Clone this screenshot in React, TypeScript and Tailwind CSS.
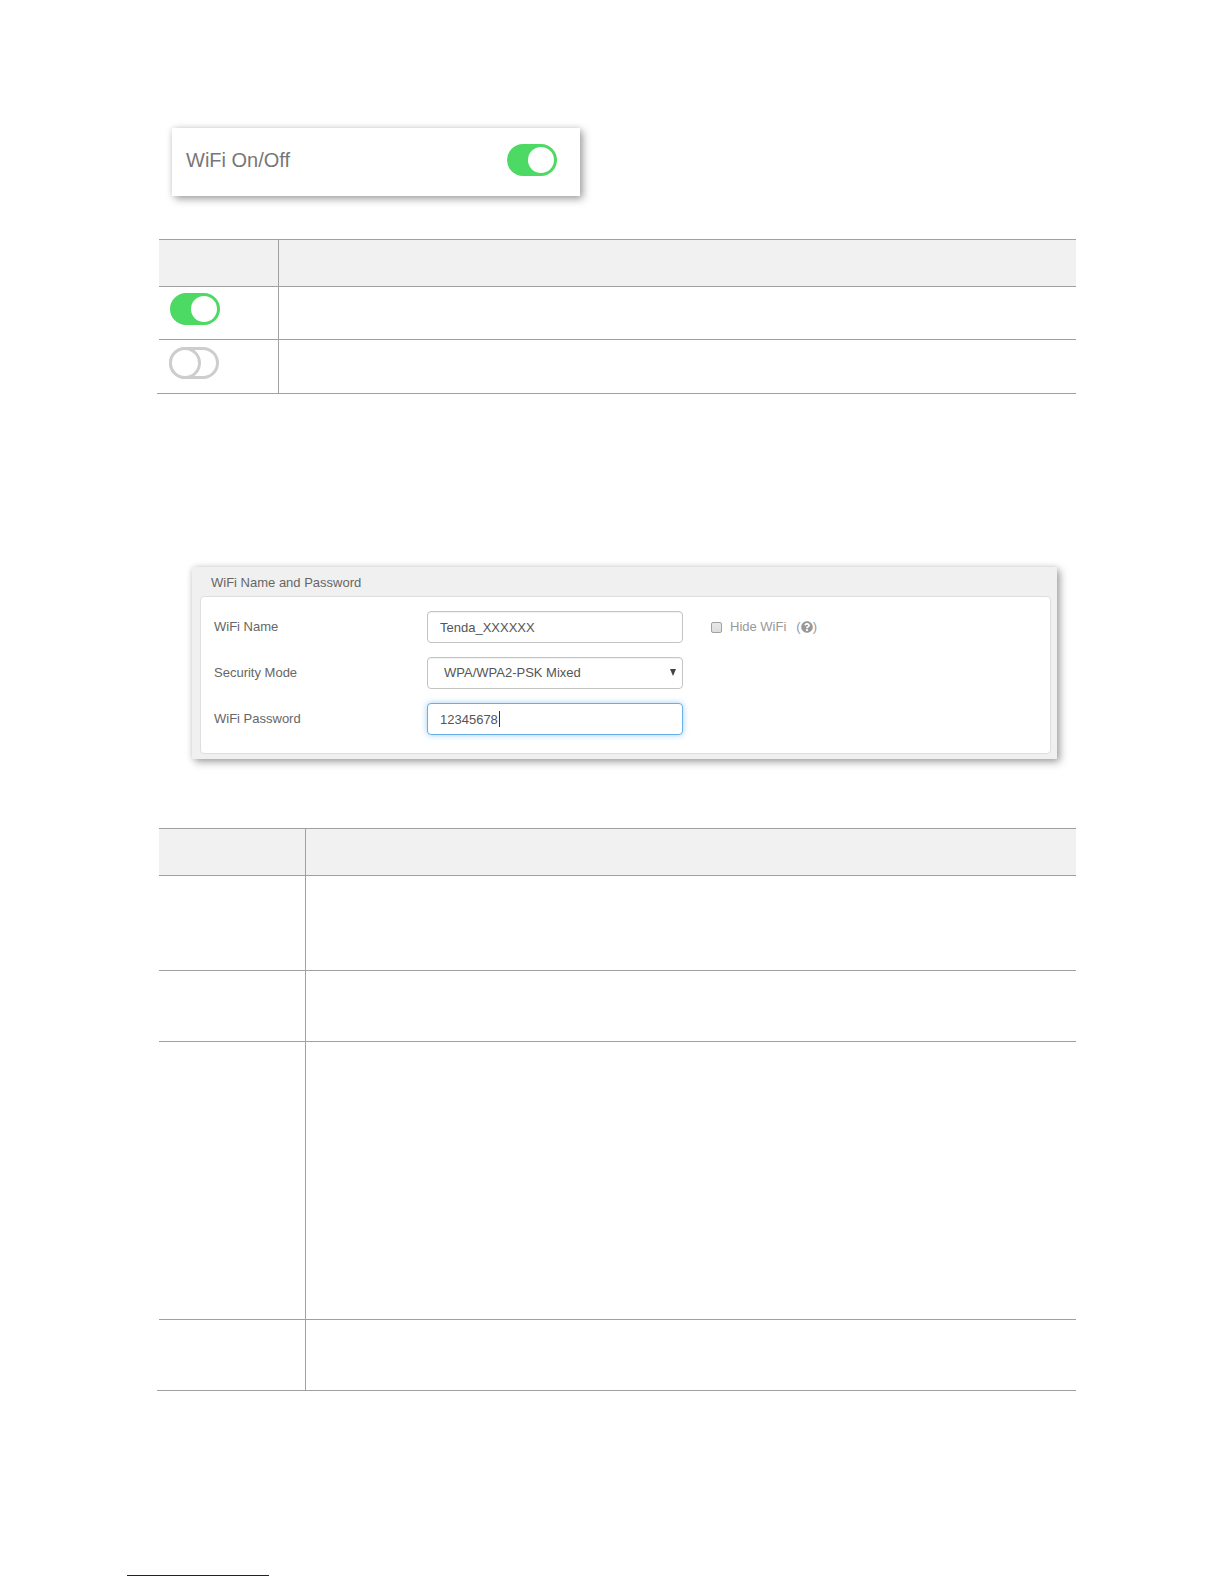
import { useState } from "react";
import { FaQuestionCircle } from "react-icons/fa";

interface ToggleProps {
  label: string;
  defaultChecked?: boolean;
}

function Toggle({ label, defaultChecked = false }: ToggleProps) {
  return (
    <input
      type="checkbox"
      role="switch"
      aria-label={label}
      defaultChecked={defaultChecked}
      className="flex h-8 w-[50px] shrink-0 appearance-none items-center rounded-full border-3 border-[#cdcdcd] bg-white before:-ml-[3px] before:size-8 before:shrink-0 before:rounded-full before:border-3 before:border-[#cdcdcd] before:bg-white before:content-[''] checked:justify-end checked:border-[#4cd964] checked:bg-[#4cd964] checked:before:ml-0 checked:before:size-[26px] checked:before:border-0"
    />
  );
}

const fieldClass =
  "h-8 w-full appearance-none rounded-[4px] border border-[#c4c4c4] bg-white text-[13px] text-[#555] shadow-[inset_0_1px_1px_rgba(0,0,0,0.06)] outline-none";

function WifiForm() {
  const [name, setName] = useState("Tenda_XXXXXX");
  const [password, setPassword] = useState("12345678");

  return (
    <section className="mr-[19px] ml-[35px] bg-[#f0f0f0] pr-[6px] pb-[5px] pl-2 text-[13px] text-[#666] shadow-[3px_3px_8px_rgba(0,0,0,0.35),0_0_6px_rgba(0,0,0,0.1)]">
      <h2 className="px-[11px] pt-[6px] pb-[3px] leading-5">WiFi Name and Password</h2>

      <form className="flex flex-col gap-[14px] rounded-[4px] border border-[#dedede] bg-white px-[13px] pt-[14px] pb-[18px]">
        <div className="flex items-center">
          <label htmlFor="wifi-name" className="w-[213px]">
            WiFi Name
          </label>
          <div className="w-64">
            <input
              id="wifi-name"
              type="text"
              value={name}
              onChange={(e) => setName(e.target.value)}
              className={`${fieldClass} px-3`}
            />
          </div>
          <label className="ml-7 flex items-center gap-2 text-[#999]">
            <input
              type="checkbox"
              className="size-[11px] appearance-none rounded-[2px] border border-[#a0a0a0] bg-linear-to-b from-[#e9e9e9] to-[#dcdcdc]"
            />
            Hide WiFi
          </label>
          <span className="ml-[10px] flex items-center text-[#999]">
            (<FaQuestionCircle className="size-3" />)
          </span>
        </div>

        <div className="flex items-center">
          <label htmlFor="security-mode" className="w-[213px]">
            Security Mode
          </label>
          <div className="relative w-64">
            <select id="security-mode" className={`${fieldClass} px-4`}>
              <option>WPA/WPA2-PSK Mixed</option>
            </select>
            <svg
              viewBox="0 0 6 7"
              className="pointer-events-none absolute top-3 right-[7px] h-[7px] w-[6px] fill-[#444]"
            >
              <path d="M0 0h6L3 7z" />
            </svg>
          </div>
        </div>

        <div className="flex items-center">
          <label htmlFor="wifi-password" className="w-[213px]">
            WiFi Password
          </label>
          <div className="relative w-64">
            <input
              id="wifi-password"
              type="text"
              value={password}
              onChange={(e) => setPassword(e.target.value)}
              className="h-8 w-full rounded-[4px] border border-[#66afe9] bg-white px-3 text-[13px] text-[#555] caret-transparent shadow-[0_0_6px_rgba(102,175,233,0.6)] outline-none"
            />
            <span className="absolute top-2 left-[72px] h-4 w-px bg-[#333]" />
          </div>
        </div>
      </form>
    </section>
  );
}

const headCell = "h-12 border-y border-[#a0a0a0] bg-[#f1f1f1]";
const divider = "border-r border-r-[#a0a0a0]";

export default function App() {
  return (
    <main className="min-h-screen bg-white pt-32 pr-[148px] pb-2 pl-[157px] font-['Liberation_Sans',Arial,sans-serif]">
      <section className="ml-[15px] flex h-[68px] max-w-[408px] items-center justify-between bg-white pr-[23px] pb-1 pl-[14px] shadow-[3px_3px_8px_rgba(0,0,0,0.35),0_0_6px_rgba(0,0,0,0.1)]">
        <span className="text-xl leading-6 text-[#777]">WiFi On/Off</span>
        <Toggle label="WiFi On/Off" defaultChecked />
      </section>

      <div className="mt-[43px] border-b border-[#a0a0a0] pl-[2px]">
        <table className="w-full table-fixed border-separate border-spacing-0">
          <thead>
            <tr>
              <th className={`w-[120px] ${headCell} ${divider}`} />
              <th className={headCell} />
            </tr>
          </thead>
          <tbody>
            <tr>
              <td className={`h-[53px] border-b border-b-[#a0a0a0] pt-[6px] pl-[11px] align-top ${divider}`}>
                <Toggle label="WiFi enabled" defaultChecked />
              </td>
              <td className="border-b border-b-[#a0a0a0]" />
            </tr>
            <tr>
              <td className={`h-[53px] pt-[7px] pl-[10px] align-top ${divider}`}>
                <Toggle label="WiFi disabled" />
              </td>
              <td />
            </tr>
          </tbody>
        </table>
      </div>

      <div className="mt-[173px]">
        <WifiForm />
      </div>

      <div className="mt-[69px] border-b border-[#a0a0a0] pl-[2px]">
        <table className="w-full table-fixed border-separate border-spacing-0">
          <thead>
            <tr>
              <th className={`w-[147px] ${headCell} ${divider}`} />
              <th className={headCell} />
            </tr>
          </thead>
          <tbody>
            <tr>
              <td className={`h-[95px] border-b border-b-[#a0a0a0] ${divider}`} />
              <td className="border-b border-b-[#a0a0a0]" />
            </tr>
            <tr>
              <td className={`h-[71px] border-b border-b-[#a0a0a0] ${divider}`} />
              <td className="border-b border-b-[#a0a0a0]" />
            </tr>
            <tr>
              <td className={`h-[278px] border-b border-b-[#a0a0a0] ${divider}`} />
              <td className="border-b border-b-[#a0a0a0]" />
            </tr>
            <tr>
              <td className={`h-[70px] ${divider}`} />
              <td />
            </tr>
          </tbody>
        </table>
      </div>

      <div className="mt-46 -ml-[30px] h-px w-[142px] bg-[#14149a]" />
    </main>
  );
}
